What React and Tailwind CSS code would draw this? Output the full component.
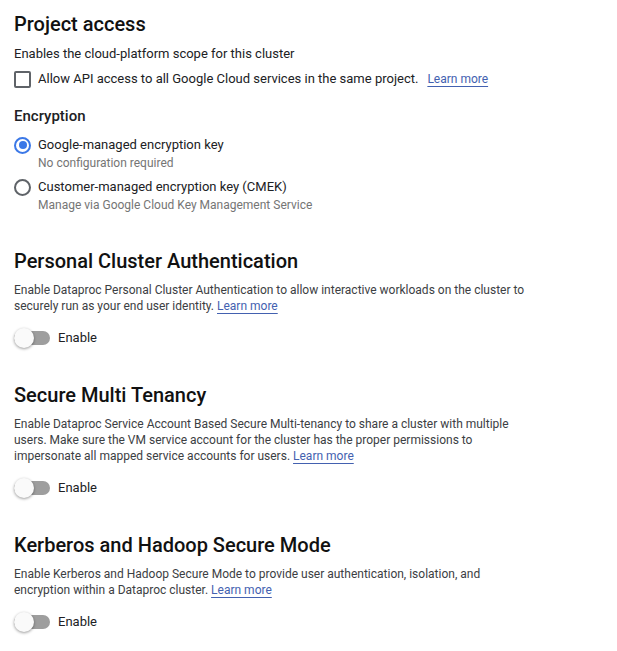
import { useState } from "react";

function LearnMore({ size }) {
  return (
    <a
      href="#"
      className={`text-[#4361b0] underline underline-offset-[3px] decoration-[#4361b0] ${size}`}
    >
      Learn more
    </a>
  );
}

function Toggle({ label }) {
  const [on, setOn] = useState(false);
  return (
    <button
      onClick={() => setOn(!on)}
      className="flex items-center h-[20px] mt-[14px]"
    >
      <span className="relative w-[36px] h-[14px] rounded-full bg-[#9e9e9e]">
        <span
          className={`absolute top-[-3px] w-[20px] h-[20px] rounded-full bg-[#fafafa] shadow-[0_1px_3px_rgba(0,0,0,0.4)] ${
            on ? "left-[16px]" : "left-0"
          }`}
        ></span>
      </span>
      <span className="ml-[8px] text-[13px] text-[#202124]">{label}</span>
    </button>
  );
}

function Radio({ checked, title, sub, className }) {
  return (
    <div className={className}>
      <div className="flex items-center h-[20px]">
        <span
          className={`w-[17px] h-[17px] rounded-full border-2 flex items-center justify-center ${
            checked ? "border-[#3b78e7]" : "border-[#5f6368]"
          }`}
        >
          {checked && <span className="w-[8px] h-[8px] rounded-full bg-[#3b78e7]"></span>}
        </span>
        <span className="ml-[7px] text-[13px] text-[#202124]">{title}</span>
      </div>
      <div className="ml-[24px] text-[12px] leading-[16px] text-[#757575]">{sub}</div>
    </div>
  );
}

function Section({ title, className, children }) {
  return (
    <div className={className}>
      <h2 className="text-[20px] leading-[28px] font-medium text-[#111]">{title}</h2>
      {children}
    </div>
  );
}

export default function App() {
  const [api, setApi] = useState(false);

  return (
    <div
      className="w-[617px] h-[651px] bg-white px-[14px] pt-[10px] text-[#3c4043]"
      style={{ fontFamily: "Roboto, 'Liberation Sans', sans-serif" }}
    >
      <h2 className="text-[20px] leading-[28px] font-medium text-[#111]">Project access</h2>
      <p className="mt-[6px] text-[13px] leading-[20px] text-[#202124]">
        Enables the cloud-platform scope for this cluster
      </p>
      <div className="mt-[3px] flex items-center h-[24px] text-[13px] text-[#202124]">
        <button
          onClick={() => setApi(!api)}
          className="w-[17px] h-[17px] border-2 border-[#5f6368] rounded-[2px]"
        ></button>
        <span className="ml-[7px]">
          Allow API access to all Google Cloud services in the same project.
        </span>
        <span className="ml-[9px]">
          <LearnMore size="text-[12px]" />
        </span>
      </div>

      <h3 className="mt-[15px] text-[15px] leading-[20px] font-medium text-[#202124]">
        Encryption
      </h3>
      <Radio
        className="mt-[9px]"
        checked
        title="Google-managed encryption key"
        sub="No configuration required"
      />
      <Radio
        className="mt-[6px]"
        title="Customer-managed encryption key (CMEK)"
        sub="Manage via Google Cloud Key Management Service"
      />

      <Section className="mt-[34px]" title="Personal Cluster Authentication">
        <p className="mt-[7px] text-[12px] leading-[16px] w-[520px]">
          Enable Dataproc Personal Cluster Authentication to allow interactive workloads on the
          cluster to securely run as your end user identity. <LearnMore />
        </p>
        <Toggle label="Enable" />
      </Section>

      <Section className="mt-[33px]" title="Secure Multi Tenancy">
        <p className="mt-[7px] text-[12px] leading-[16px] w-[520px]">
          Enable Dataproc Service Account Based Secure Multi-tenancy to share a cluster with
          multiple users. Make sure the VM service account for the cluster has the proper
          permissions to impersonate all mapped service accounts for users. <LearnMore />
        </p>
        <Toggle label="Enable" />
      </Section>

      <Section className="mt-[33px]" title="Kerberos and Hadoop Secure Mode">
        <p className="mt-[7px] text-[12px] leading-[16px] w-[520px]">
          Enable Kerberos and Hadoop Secure Mode to provide user authentication, isolation, and
          encryption within a Dataproc cluster. <LearnMore />
        </p>
        <Toggle label="Enable" />
      </Section>
    </div>
  );
}
